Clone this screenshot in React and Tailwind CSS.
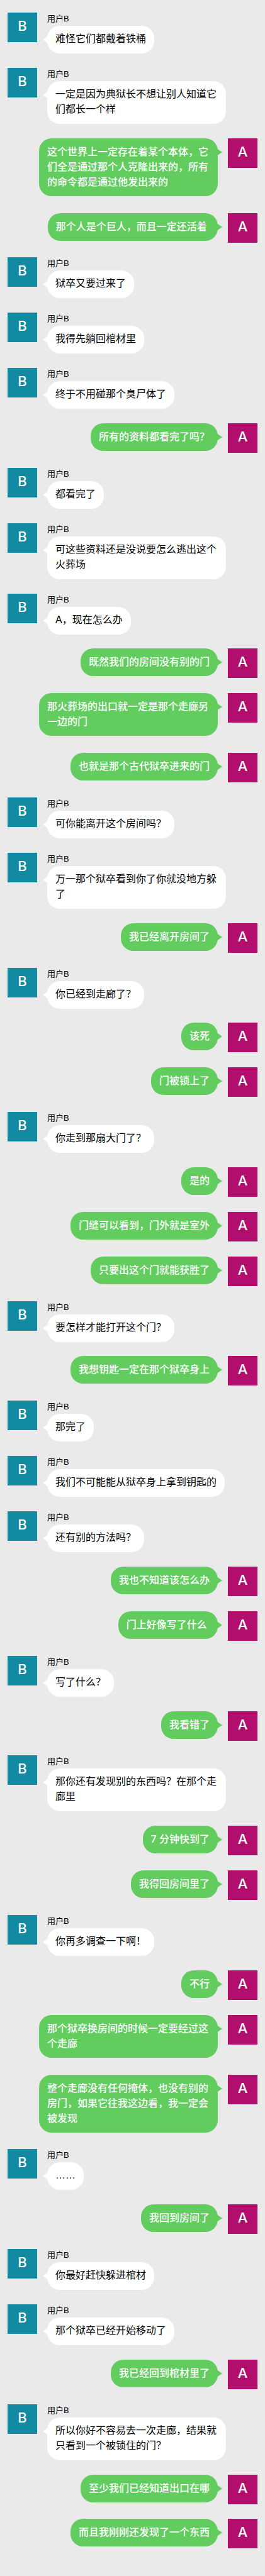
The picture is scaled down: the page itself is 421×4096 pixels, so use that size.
const messages = [
  ["B", "难怪它们都戴着铁桶"],
  ["B", "一定是因为典狱长不想让别人知道它们都长一个样"],
  ["A", "这个世界上一定存在着某个本体，它们全是通过那个人克隆出来的，所有的命令都是通过他发出来的"],
  ["A", "那个人是个巨人，而且一定还活着\u00a0"],
  ["B", "狱卒又要过来了"],
  ["B", "我得先躺回棺材里"],
  ["B", "终于不用碰那个臭尸体了"],
  ["A", "所有的资料都看完了吗？"],
  ["B", "都看完了"],
  ["B", "可这些资料还是没说要怎么逃出这个火葬场"],
  ["B", "A，现在怎么办"],
  ["A", "既然我们的房间没有别的门"],
  ["A", "那火葬场的出口就一定是那个走廊另一边的门"],
  ["A", "也就是那个古代狱卒进来的门"],
  ["B", "可你能离开这个房间吗？"],
  ["B", "万一那个狱卒看到你了你就没地方躲了"],
  ["A", "我已经离开房间了"],
  ["B", "你已经到走廊了？"],
  ["A", "该死"],
  ["A", "门被锁上了"],
  ["B", "你走到那扇大门了？"],
  ["A", "是的"],
  ["A", "门缝可以看到，门外就是室外"],
  ["A", "只要出这个门就能获胜了"],
  ["B", "要怎样才能打开这个门？"],
  ["A", "我想钥匙一定在那个狱卒身上"],
  ["B", "那完了"],
  ["B", "我们不可能能从狱卒身上拿到钥匙的"],
  ["B", "还有别的方法吗？"],
  ["A", "我也不知道该怎么办"],
  ["A", "门上好像写了什么\u00a0"],
  ["B", "写了什么？"],
  ["A", "我看错了"],
  ["B", "那你还有发现别的东西吗？在那个走廊里"],
  ["A", "7 分钟快到了"],
  ["A", "我得回房间里了"],
  ["B", "你再多调查一下啊！"],
  ["A", "不行"],
  ["A", "那个狱卒换房间的时候一定要经过这个走廊"],
  ["A", "整个走廊没有任何掩体，也没有别的房门，如果它往我这边看，我一定会被发现"],
  ["B", "……"],
  ["A", "我回到房间了"],
  ["B", "你最好赶快躲进棺材"],
  ["B", "那个狱卒已经开始移动了"],
  ["A", "我已经回到棺材里了"],
  ["B", "所以你好不容易去一次走廊，结果就只看到一个被锁住的门？"],
  ["A", "至少我们已经知道出口在哪"],
  ["A", "而且我刚刚还发现了一个东西"],
];

function Avatar({ letter, color }) {
  return (
    <div
      className={`flex size-[47px] shrink-0 justify-center font-['Inter',sans-serif] text-[22px] leading-[43px] font-medium text-white ${color}`}
    >
      {letter}
    </div>
  );
}

function Incoming({ text }) {
  return (
    <li className="flex items-start gap-4 pr-[50px] font-['Liberation_Sans','Noto_Sans_CJK_SC',sans-serif]">
      <Avatar letter="B" color="bg-[#118aa2]" />
      <div className="flex min-w-0 flex-col items-start">
        <div className="mb-px text-[13px] leading-5">用户B</div>
        <div className="relative rounded-[20px] bg-white px-[13px] pt-[9px] pb-[11px] text-[16px] leading-6">
          <svg className="absolute top-4 -left-[7px] h-3 w-2" viewBox="0 0 8 12" aria-hidden="true">
            <path d="M0 6 8 0.5V11.5Z" fill="#ffffff" />
          </svg>
          {text}
        </div>
      </div>
    </li>
  );
}

function Outgoing({ text }) {
  return (
    <li className="flex items-start justify-end gap-4 pl-[50px] font-['Inter','Noto_Sans_CJK_SC',sans-serif]">
      <div className="relative mb-1 rounded-[20px] bg-[#62cc5f] px-[13px] pt-[9px] pb-[11px] text-[16px] leading-6 font-medium text-white">
        <svg className="absolute top-4 -right-[7px] h-3 w-2" viewBox="0 0 8 12" aria-hidden="true">
          <path d="M8 6 0 0.5V11.5Z" fill="#62cc5f" />
        </svg>
        {text}
      </div>
      <Avatar letter="A" color="bg-[#b10e6e]" />
    </li>
  );
}

export default function App() {
  return (
    <main lang="zh-CN" className="bg-[#eaeaea] text-black">
      <ul className="flex min-h-screen flex-col justify-between gap-[22px] px-3 pt-5 pb-[42px]">
        {messages.map(([from, text], i) =>
          from === "A" ? <Outgoing key={i} text={text} /> : <Incoming key={i} text={text} />
        )}
      </ul>
    </main>
  );
}
